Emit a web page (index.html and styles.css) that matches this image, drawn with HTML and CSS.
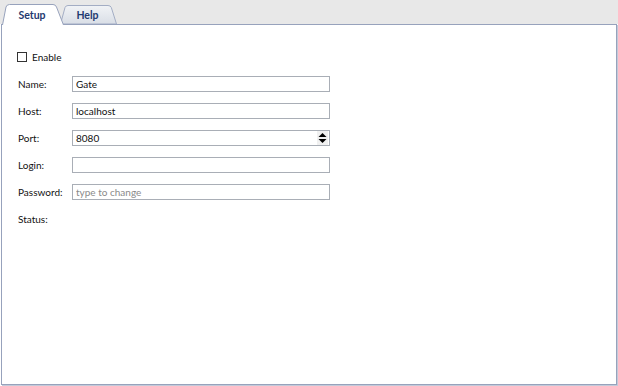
FILE: index.html
```html
<!DOCTYPE html>
<html lang="en">
<head>
    <meta charset="UTF-8">
    <title>Gate setup</title>
    <link rel="stylesheet" href="styles.css">
</head>
<body>
    <div class="window">
        <div class="tabbar">
            <div class="tab tab-active">
                <svg class="tab-shape" width="62" height="21" viewBox="0 0 62 21">
                    <path d="M0.5,21 L4,3 Q4.8,0.5 7.5,0.5 L51,0.5 Q53.5,0.5 54.5,3 L61.5,21 Z" fill="#ffffff"/>
                    <path d="M0.5,21 L4,3 Q4.8,0.5 7.5,0.5 L51,0.5 Q53.5,0.5 54.5,3 L61.5,21" fill="none" stroke="#97a2bc"/>
                </svg>
                <span>Setup</span>
            </div>
            <div class="tab">
                <svg class="tab-shape" width="59" height="19" viewBox="0 0 59 19">
                    <defs>
                        <linearGradient id="tabfill" x1="0" y1="0" x2="0" y2="1">
                            <stop offset="0" stop-color="#f1f3f6"/>
                            <stop offset="1" stop-color="#d9dee6"/>
                        </linearGradient>
                    </defs>
                    <path d="M1.5,19 L6,2.5 Q6.8,0.5 9,0.5 L49,0.5 Q51.5,0.5 52.3,2.5 L57.5,19 Z" fill="url(#tabfill)" stroke="#a3adc4"/>
                </svg>
                <span>Help</span>
            </div>
        </div>

        <div class="panel">
            <label class="row check-row">
                <span class="checkbox"></span>
                <span>Enable</span>
            </label>
            <div class="row">
                <span class="label">Name:</span>
                <input class="field" type="text" value="Gate">
            </div>
            <div class="row">
                <span class="label">Host:</span>
                <input class="field" type="text" value="localhost">
            </div>
            <div class="row">
                <span class="label">Port:</span>
                <div class="field spin">
                    <span>8080</span>
                    <svg class="spin-arrows" width="11" height="14" viewBox="0 0 11 14">
                        <rect x="0" y="0" width="11" height="14" fill="#f0f0f0"/>
                        <path d="M5.5,2 L9.5,6 L1.5,6 Z" fill="#000"/>
                        <path d="M1.5,8 L9.5,8 L5.5,12 Z" fill="#000"/>
                    </svg>
                </div>
            </div>
            <div class="row">
                <span class="label">Login:</span>
                <input class="field" type="text" value="">
            </div>
            <div class="row">
                <span class="label">Password:</span>
                <input class="field" type="password" placeholder="type to change">
            </div>
            <div class="row">
                <span class="label">Status:</span>
            </div>
        </div>
    </div>
</body>
</html>
```

FILE: styles.css
```css
* {
    margin: 0;
    padding: 0;
    box-sizing: border-box;
}

body {
    font-family: Lato, "Open Sans", sans-serif;
    font-size: 10px;
    color: #111;
    background: #ffffff;
}

.window {
    width: 618px;
    height: 386px;
    display: flex;
    flex-direction: column;
}

.tabbar {
    height: 24px;
    background: #e8e8e8;
    display: flex;
    align-items: flex-end;
    padding-left: 2px;
}

.tab {
    position: relative;
    width: 59px;
    height: 19px;
    margin-left: -5px;
    display: flex;
    justify-content: center;
    padding-top: 4px;
    padding-right: 2px;
    font-weight: bold;
    font-size: 10.5px;
    color: #1f3a70;
}

.tab-active {
    width: 62px;
    height: 21px;
    margin-left: 0;
    margin-bottom: -1px;
    padding-top: 5px;
    z-index: 2;
}

.tab-shape {
    position: absolute;
    top: 0;
    left: 0;
}

.tab span {
    position: relative;
}

.panel {
    flex: 1;
    margin: 0 1px 1px 1px;
    border: 1px solid #97a2bc;
    box-shadow: 1px 1px 0 #c3cad9;
    padding: 24px 0 0 16px;
    display: flex;
    flex-direction: column;
    gap: 11px;
}

.row {
    height: 16px;
    display: flex;
    align-items: center;
}

.check-row {
    gap: 5px;
}

.checkbox {
    width: 10px;
    height: 10px;
    border: 1px solid #333;
    background: #fff;
    margin-left: -1px;
}

.label {
    width: 54px;
}

.field {
    width: 258px;
    height: 16px;
    border: 1px solid #a9aeb6;
    padding: 0 3px;
    font-family: inherit;
    font-size: 10px;
    color: #111;
    background: #fff;
    outline: none;
}

.field::placeholder {
    color: #8a8a8a;
}

.spin {
    display: flex;
    align-items: center;
    justify-content: space-between;
    padding-right: 1px;
}
```
